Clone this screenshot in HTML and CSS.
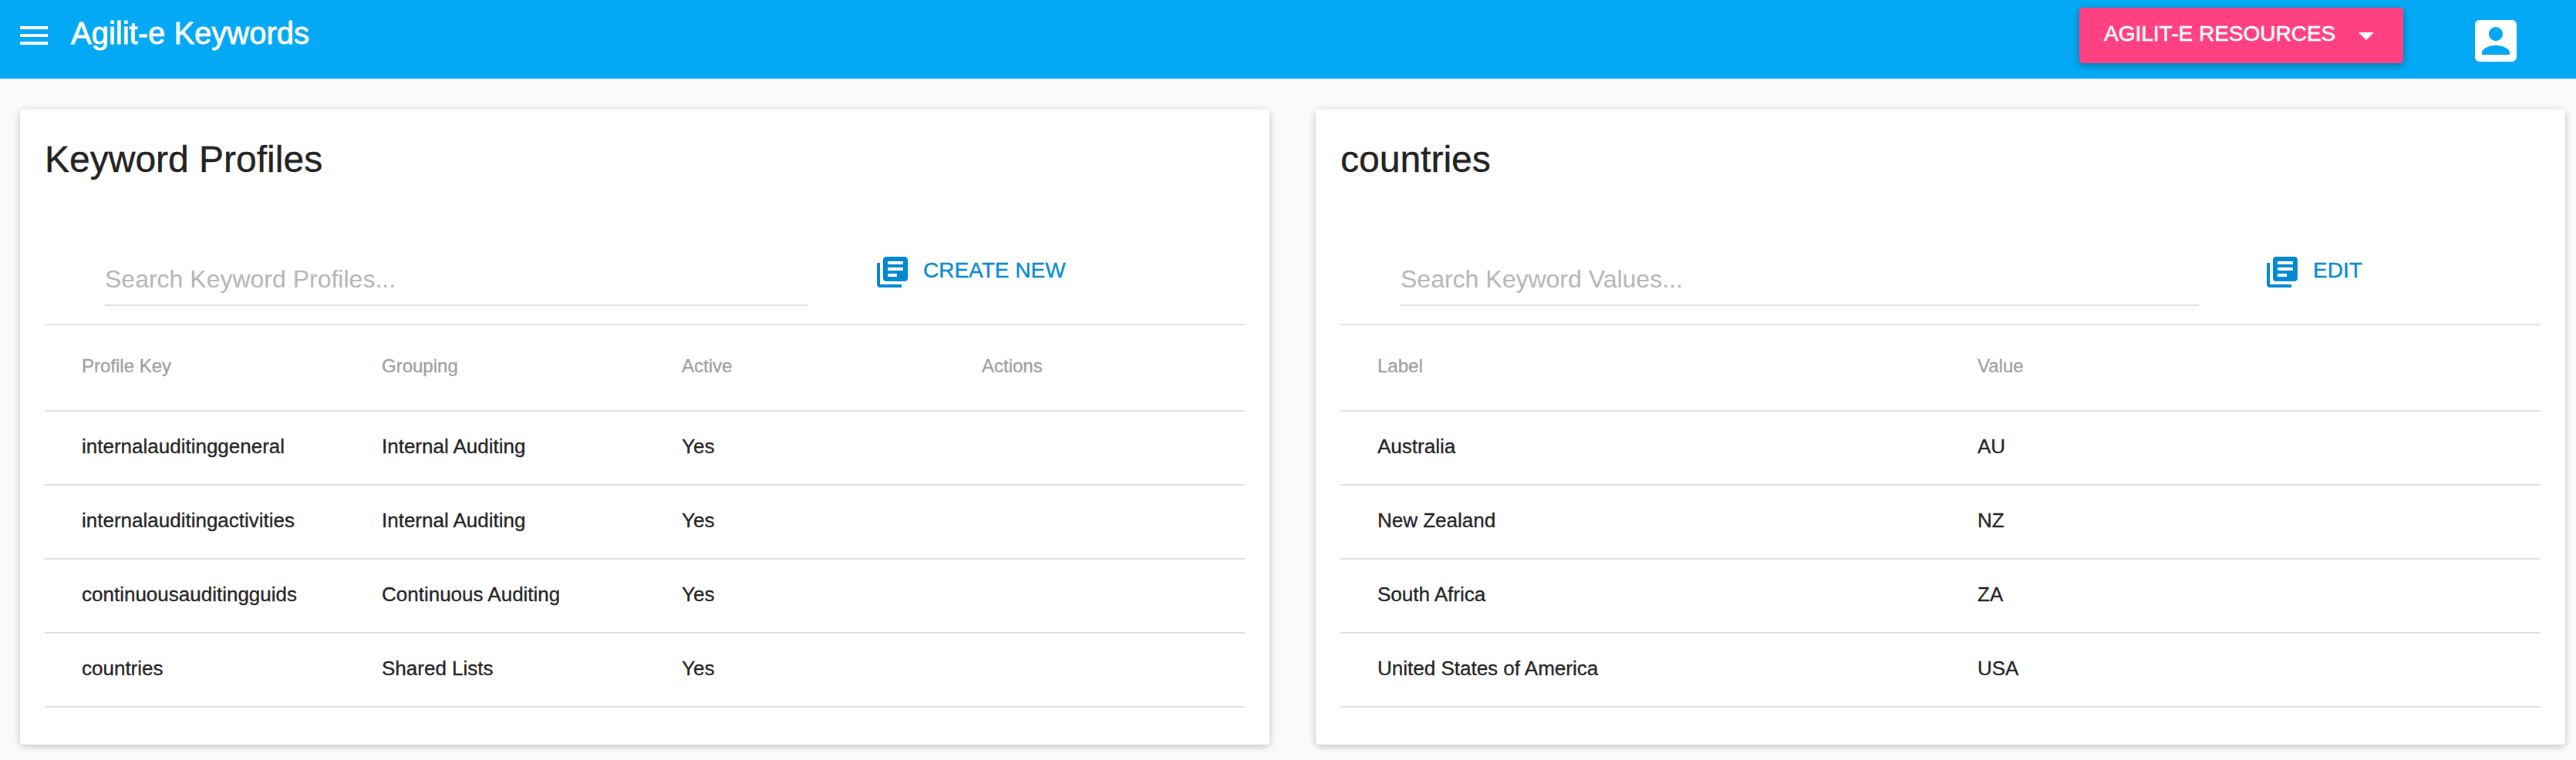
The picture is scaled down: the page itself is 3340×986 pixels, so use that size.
FILE: index.html
```html
<!DOCTYPE html>
<html lang="en">
<head>
<meta charset="utf-8">
<title>Agilit-e Keywords</title>
<link rel="stylesheet" href="styles.css">
</head>
<body>
<svg class="defs" width="0" height="0" aria-hidden="true">
  <symbol id="books" viewBox="0 0 24 24"><path d="M4 6H2v14c0 1.100.9 2 2 2h14v-2H4V6zm16-4H8c-1.100 0-2 .9-2 2v12c0 1.100.9 2 2 2h12c1.100 0 2-.9 2-2V4c0-1.100-.9-2-2-2zm-1 9H9V9h10v2zm-4 4H9v-2h6v2zm4-8H9V5h10v2z"/></symbol>
</svg>
<header class="appbar">
  <svg class="menu-icon" viewBox="0 0 24 24"><path d="M3 18h18v-2H3v2zm0-5h18v-2H3v2zm0-7v2h18V6H3z"/></svg>
  <h1 class="app-title">Agilit-e Keywords</h1>
  <button class="resources"><span>AGILIT-E RESOURCES</span><svg class="caret" viewBox="0 0 24 24"><path d="M7 10l5 5 5-5z"/></svg></button>
  <svg class="account-icon" viewBox="0 0 24 24"><path d="M3 5v14c0 1.100.89 2 2 2h14c1.100 0 2-.9 2-2V5c0-1.100-.9-2-2-2H5c-1.110 0-2 .9-2 2zm12 4c0 1.660-1.340 3-3 3s-3-1.340-3-3 1.340-3 3-3 3 1.340 3 3zm-9 8c0-2 4-3.100 6-3.100s6 1.100 6 3.100v1H6v-1z"/></svg>
</header>
<main class="cards">
  <section class="card">
    <h2 class="card-title">Keyword Profiles</h2>
    <div class="toolbar">
      <input class="search search-profiles" type="text" placeholder="Search Keyword Profiles...">
      <button class="flat flat-create"><svg class="books" viewBox="0 0 24 24"><use href="#books"/></svg><span>CREATE NEW</span></button>
    </div>
    <table class="table">
      <thead><tr><th>Profile Key</th><th>Grouping</th><th>Active</th><th>Actions</th></tr></thead>
      <tbody>
        <tr><td>internalauditinggeneral</td><td>Internal Auditing</td><td>Yes</td><td></td></tr>
        <tr><td>internalauditingactivities</td><td>Internal Auditing</td><td>Yes</td><td></td></tr>
        <tr><td>continuousauditingguids</td><td>Continuous Auditing</td><td>Yes</td><td></td></tr>
        <tr><td>countries</td><td>Shared Lists</td><td>Yes</td><td></td></tr>
      </tbody>
    </table>
  </section>
  <section class="card">
    <h2 class="card-title">countries</h2>
    <div class="toolbar">
      <input class="search search-values" type="text" placeholder="Search Keyword Values...">
      <button class="flat"><svg class="books" viewBox="0 0 24 24"><use href="#books"/></svg><span>EDIT</span></button>
    </div>
    <table class="table">
      <thead><tr><th>Label</th><th>Value</th></tr></thead>
      <tbody>
        <tr><td>Australia</td><td>AU</td></tr>
        <tr><td>New Zealand</td><td>NZ</td></tr>
        <tr><td>South Africa</td><td>ZA</td></tr>
        <tr><td>United States of America</td><td>USA</td></tr>
      </tbody>
    </table>
  </section>
</main>
</body>
</html>
```

FILE: styles.css
```css
* { box-sizing: border-box; }
body {
  margin: 0;
  height: 986px;
  overflow: hidden;
  background: #fafafa;
  color: #212121;
  font-family: "Liberation Sans", Arial, sans-serif;
}
button {
  border: 0;
  margin: 0;
  font: inherit;
  font-size: 28px;
}
svg { display: block; flex: none; fill: currentColor; }
.defs { position: absolute; }

.appbar {
  display: flex;
  align-items: flex-start;
  height: 102px;
  padding: 0 68px 0 20px;
  background: #03a9f4;
  color: #fff;
}
.menu-icon { width: 48px; height: 48px; margin-top: 22px; }
.app-title {
  flex: 1;
  margin: 0 0 0 24px;
  font-size: 40px;
  font-weight: 400;
  line-height: 86px;
  -webkit-text-stroke: 0.8px currentColor;
}
.resources {
  display: flex;
  align-items: flex-start;
  width: 420px;
  height: 72px;
  margin-top: 10px;
  padding: 0 24px 0 32px;
  justify-content: space-between;
  border-radius: 4px;
  background: #ff4081;
  color: #fff;
  line-height: 67px;
  white-space: nowrap;
  -webkit-text-stroke: 0.6px currentColor;
  box-shadow: 0 2px 12px rgba(0, 0, 0, 0.14), 0 4px 10px rgba(0, 0, 0, 0.18);
}
.caret { width: 48px; height: 48px; margin-top: 12px; -webkit-text-stroke: 0; }
.account-icon { width: 72px; height: 72px; margin: 17px 0 0 84px; }

.cards {
  display: grid;
  grid-template-columns: 1620px 1620px;
  column-gap: 60px;
  padding: 40px 0 0 26px;
}
.card {
  height: 824px;
  padding: 32px;
  border-radius: 4px;
  background: #fff;
  box-shadow: 0 2px 12px rgba(0, 0, 0, 0.12), 0 2px 8px rgba(0, 0, 0, 0.12);
}
.card-title {
  margin: 0;
  font-size: 48px;
  font-weight: 400;
  line-height: 65px;
  -webkit-text-stroke: 0.4px currentColor;
}
.toolbar {
  display: flex;
  align-items: flex-end;
  height: 181px;
  padding: 0 0 23px 78px;
}
.search {
  height: 66px;
  padding: 0 0 2px;
  border: 0;
  border-bottom: 2px solid #e0e0e0;
  background: none;
  font: inherit;
  font-size: 32px;
}
.search::placeholder { color: #b5b5b5; opacity: 1; }
.search-profiles { width: 912px; }
.search-values { width: 1035px; }
.flat {
  display: flex;
  align-items: center;
  gap: 16px;
  height: 72px;
  margin: 0 0 8px 84px;
  padding: 0;
  background: none;
  color: #0288d1;
  -webkit-text-stroke: 0.3px currentColor;
}
.flat-create { margin-left: 85px; }
.flat span { padding-bottom: 4px; }
.books { width: 48px; height: 48px; -webkit-text-stroke: 0; }

.table {
  width: 100%;
  table-layout: fixed;
  border-collapse: separate;
  border-spacing: 0;
  border-top: 2px solid #e0e0e0;
}
.table th, .table td {
  padding: 0 48px;
  border-bottom: 2px solid #e0e0e0;
  text-align: left;
  white-space: nowrap;
  -webkit-text-stroke: 0.3px currentColor;
}
.table th {
  height: 112px;
  padding-bottom: 4px;
  color: #9e9e9e;
  font-size: 24px;
  font-weight: 400;
}
.table td { height: 96px; padding-bottom: 3px; font-size: 26px; }
```
